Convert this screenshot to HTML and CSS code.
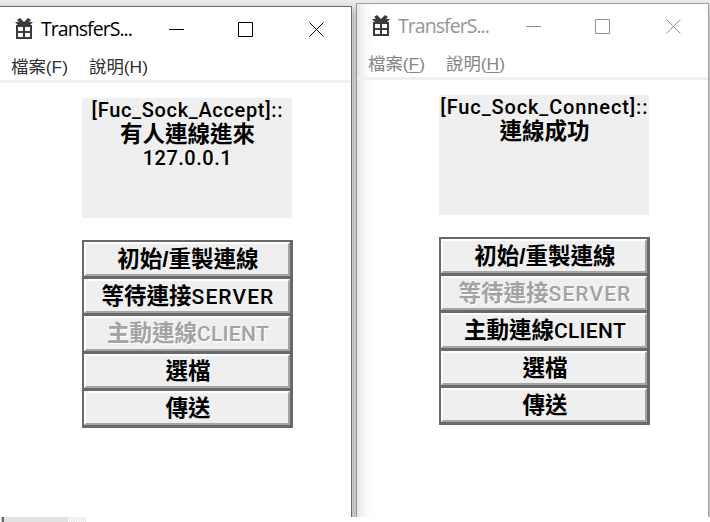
FILE: index.html
```html
<!DOCTYPE html>
<html lang="zh-Hant">
<head>
<meta charset="utf-8">
<title>TransferS...</title>
<link rel="stylesheet" href="styles.css">
</head>
<body>
<main class="desktop">
  <section class="window active">
    <header class="titlebar">
      <svg class="app-icon" viewBox="0 0 18 22"><path fill="#3b3b3b" fill-rule="evenodd" d="M2 2 5 0 9 4 13 0 16 2 14 4 18 4 15 7H17V21H1V7H3L0 4H4ZM3 9V13H8V9ZM10 9V13H15V9ZM3 15V19H8V15ZM10 15V19H15V15Z"/></svg>
      <h1 class="title">TransferS...</h1>
      <div class="controls">
        <svg viewBox="0 0 16 16"><path d="M0 8.5H15"/></svg>
        <svg viewBox="0 0 16 16"><path d="M.5 1.5H14.5V15.5H.5Z"/></svg>
        <svg viewBox="0 0 16 16"><path d="M.5 1.5 14.5 15.5M14.5 1.5.5 15.5"/></svg>
      </div>
    </header>
    <nav class="menu"><span>檔案(F)</span><span>說明(H)</span></nav>
    <div class="status"><p class="accept">[Fuc_Sock_Accept]::</p><p class="cjk">有人連線進來</p><p class="ip">127.0.0.1</p></div>
    <div class="buttons">
      <button class="reset">初始/重製連線</button>
      <button>等待連接<span class="server">SERVER</span></button>
      <button disabled>主動連線<span class="client">CLIENT</span></button>
      <button>選檔</button>
      <button>傳送</button>
    </div>
  </section>
  <section class="window inactive">
    <header class="titlebar">
      <svg class="app-icon" viewBox="0 0 18 22"><path fill="#3b3b3b" fill-rule="evenodd" d="M2 2 5 0 9 4 13 0 16 2 14 4 18 4 15 7H17V21H1V7H3L0 4H4ZM3 9V13H8V9ZM10 9V13H15V9ZM3 15V19H8V15ZM10 15V19H15V15Z"/></svg>
      <h1 class="title">TransferS...</h1>
      <div class="controls">
        <svg viewBox="0 0 16 16"><path d="M0 8.5H15"/></svg>
        <svg viewBox="0 0 16 16"><path d="M.5 1.5H14.5V15.5H.5Z"/></svg>
        <svg viewBox="0 0 16 16"><path d="M.5 1.5 14.5 15.5M14.5 1.5.5 15.5"/></svg>
      </div>
    </header>
    <nav class="menu"><span>檔案(<u>F</u>)</span><span>說明(<u>H</u>)</span></nav>
    <div class="status"><p class="connect">[Fuc_Sock_Connect]::</p><p class="cjk">連線成功</p></div>
    <div class="buttons">
      <button class="reset">初始/重製連線</button>
      <button disabled>等待連接<span class="server">SERVER</span></button>
      <button>主動連線<span class="client">CLIENT</span></button>
      <button>選檔</button>
      <button>傳送</button>
    </div>
  </section>
</main>
<footer class="strip"><i class="bar"></i><i class="checker"></i></footer>
</body>
</html>
```
FILE: styles.css
```css
* { box-sizing: border-box; }
body { margin: 0; width: 710px; height: 522px; overflow: hidden; background: #fff; }
.desktop {
  display: flex;
  align-items: flex-end;
  gap: 4px;
  height: 517px;
  background: linear-gradient(#ededed, #dcdcdc 7px, #c4c4c4 16px, #c4c4c4);
}
.window { background: #fff; border-top: 1px solid #6c6c6c; border-right: 1px solid #6c6c6c; }
.active { width: 352px; height: 511px; }
.inactive {
  width: 353px;
  height: 514px;
  border-color: #a0a0a0;
  border-left: 1px solid #969696;
  background: linear-gradient(90deg, #e6e6e6, #f8f8f8 8px, #fff 15px);
}
.titlebar { display: flex; height: 46px; padding-left: 15px; }
.app-icon { width: 18px; height: 22px; margin-top: 11px; }
.title {
  width: 100px;
  margin: 0 0 0 8px;
  font: 400 19.5px/44px "Open Sans", sans-serif;
  letter-spacing: -.95px;
  white-space: nowrap;
}
.controls { display: flex; gap: 54px; margin: 14px 0 0 28px; }
.controls svg { width: 16px; height: 16px; fill: none; stroke: #000; stroke-width: 1; }
.controls svg:nth-child(2) { margin: 0 1px 0 -1px; }
.inactive .title { color: #969696; }
.inactive .controls svg { stroke: #929292; }
.menu {
  display: flex;
  gap: 21px;
  height: 30px;
  padding-left: 11px;
  border-bottom: 3px solid #f0f0f0;
  font: 17.4px/29px "Liberation Sans", "Noto Sans CJK TC", sans-serif;
  color: #303030;
  white-space: nowrap;
}
.menu span { height: 27px; }
.inactive .menu { color: #858585; }
u { text-underline-offset: 2px; }
.status {
  width: 210px;
  height: 120px;
  margin: 15px 0 0 82.4px;
  background: #efefef;
  text-align: center;
  font: 500 20px/24px Roboto, "Noto Sans CJK TC", sans-serif;
  white-space: nowrap;
}
.status p { margin: 0; height: 24px; }
.accept { letter-spacing: .68px; }
.connect { letter-spacing: .88px; }
.status .cjk {
  font-family: "Liberation Sans", "Noto Sans CJK TC", sans-serif;
  font-weight: 700;
  font-size: 22.5px;
  line-height: 26px;
}
.ip { letter-spacing: .5px; }
.buttons {
  display: grid;
  grid-template-rows: repeat(5, 1fr);
  row-gap: 3px;
  width: 211px;
  height: 188px;
  margin: 22px 0 0 82px;
  padding: 2px 3px 3px 2px;
  background: #696969;
}
button {
  min-height: 0;
  padding: 1px 0 0 2px;
  border: solid;
  border-width: 2px;
  border-color: #fff #a5a5a5 #a5a5a5 #fff;
  background: #efefef;
  color: #000;
  font: 700 22.5px/30px "Liberation Sans", "Noto Sans CJK TC", sans-serif;
  white-space: nowrap;
}
button span { font: 500 21px/30px Roboto, sans-serif; }
.server { letter-spacing: 1.1px; }
.client { letter-spacing: .3px; }
button:disabled { color: #a3a3a3; text-shadow: 1px 1px #fff; }
.strip { display: flex; height: 5px; padding-left: 1px; }
.bar { width: 67px; background: linear-gradient(90deg, #c8c8c8 1px, #666 1px 3px, #e2e2e2 3px); }
.checker { width: 18px; background: repeating-conic-gradient(#e4e4e4 0 25%, #fff 0 50%) 0 0 / 2px 2px; }
```
